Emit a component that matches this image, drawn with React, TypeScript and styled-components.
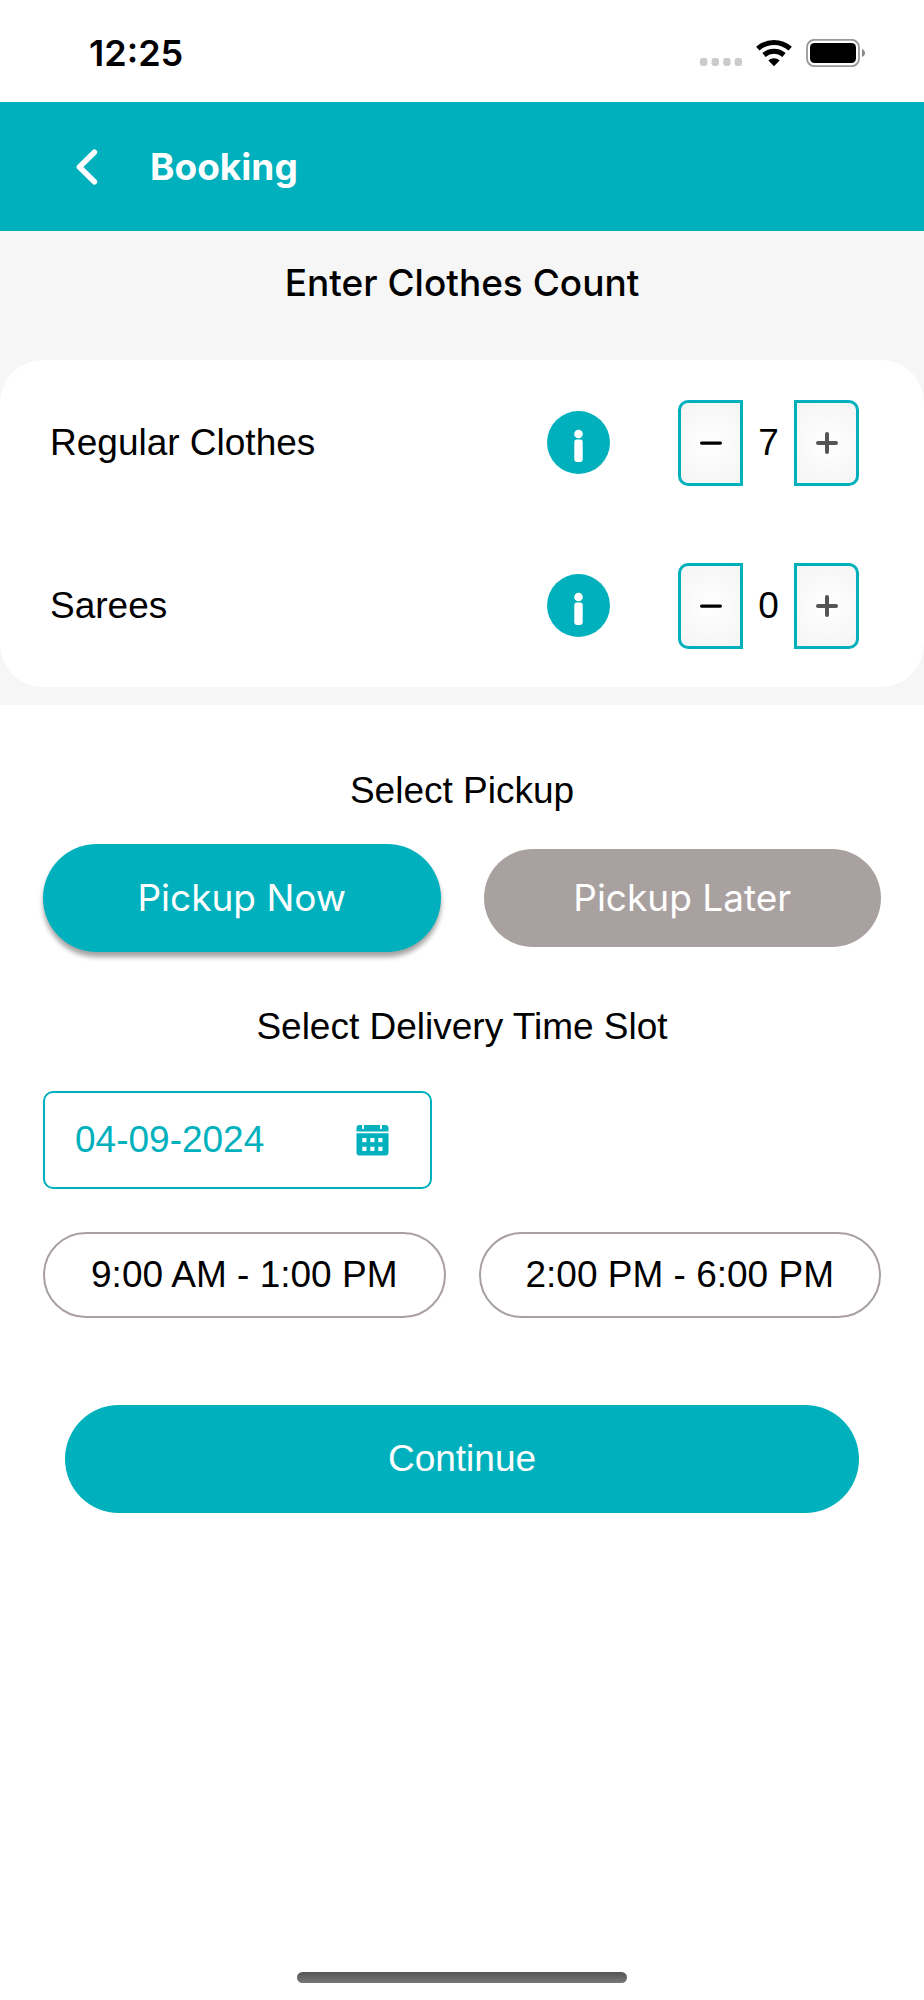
import React, { useState } from "react";
import styled, { createGlobalStyle } from "styled-components";

const teal = "#00b1bd";
const grey = "#a9a0a0";
const uiFont = `Inter, "Liberation Sans", sans-serif`;
const bodyFont = `"Liberation Sans", Arial, sans-serif`;

const GlobalStyle = createGlobalStyle`
  *, *::before, *::after { box-sizing: border-box; }
  body { margin: 0; background: #fff; }
  button, input { font: inherit; color: inherit; }
  button { cursor: pointer; }
`;

const Screen = styled.div`
  min-height: 100vh;
  display: flex;
  flex-direction: column;
  background: #fff;
  color: #000;
  font-family: ${bodyFont};
  font-size: 37px;
  line-height: 44px;
`;

const StatusBar = styled.div`
  height: 102px;
  padding: 4px 59px 0 89px;
  display: flex;
  align-items: center;
  justify-content: space-between;
  font-family: ${uiFont};
  font-size: 36px;
  font-weight: 600;
`;

const StatusIcons = styled.div`
  display: flex;
  align-items: center;
  gap: 14px;
`;

const Header = styled.header`
  height: 129px;
  padding: 0 64px;
  display: flex;
  align-items: center;
  gap: 40px;
  background: ${teal};
  color: #fff;
`;

const BackButton = styled.button`
  display: flex;
  padding: 0 12px;
  border: 0;
  background: none;
`;

const HeaderTitle = styled.h1`
  margin: 0;
  font-family: ${uiFont};
  font-size: 37px;
  font-weight: 700;
`;

const CountSection = styled.section`
  padding-bottom: 18px;
  background: #f6f6f6;
`;

const Heading = styled.h2<{ $ui?: boolean }>`
  margin: 0;
  font-family: ${(p) => (p.$ui ? uiFont : bodyFont)};
  font-size: 37px;
  font-weight: ${(p) => (p.$ui ? 500 : 400)};
  text-align: center;
`;

const CountHeading = styled(Heading)`
  padding: 30px 0 55px;
`;

const Card = styled.div`
  padding-top: 1px;
  border-radius: 43px;
  background: #fff;
`;

const ItemRow = styled.div`
  height: 163px;
  padding: 0 65px 0 50px;
  display: flex;
  align-items: center;
`;

const ItemName = styled.span`
  flex: 1;
`;

const InfoButton = styled.button`
  display: flex;
  margin-right: 68px;
  padding: 0;
  border: 0;
  background: none;
`;

const Stepper = styled.div`
  display: flex;
  align-items: center;
`;

const StepButton = styled.button<{ $side: "left" | "right" }>`
  width: 65px;
  height: 86px;
  padding: 0;
  display: flex;
  align-items: center;
  justify-content: center;
  border: 3px solid ${teal};
  border-radius: ${(p) => (p.$side === "left" ? "10px 0 0 10px" : "0 10px 10px 0")};
  background: radial-gradient(circle, #fff 0%, #f4f4f4 100%);
`;

const Count = styled.output`
  width: 51px;
  text-align: center;
`;

const Form = styled.main`
  padding: 64px 43px 0;
  display: flex;
  flex-direction: column;
`;

const PickupRow = styled.div`
  display: grid;
  grid-template-columns: 1fr 1fr;
  align-items: center;
  gap: 43px;
  margin: 31px 0 53px;
`;

const PickupButton = styled.button<{ $active: boolean }>`
  height: ${(p) => (p.$active ? 108 : 98)}px;
  border: 0;
  border-radius: 54px;
  background: ${(p) => (p.$active ? teal : grey)};
  box-shadow: ${(p) => (p.$active ? "0 5px 5px rgba(0, 0, 0, 0.36)" : "none")};
  color: #fff;
  font-family: ${uiFont};
`;

const DateField = styled.div`
  width: 100%;
  max-width: 389px;
  height: 98px;
  margin: 42px 0 43px;
  padding: 0 41px 0 30px;
  display: flex;
  align-items: center;
  justify-content: space-between;
  border: 2px solid ${teal};
  border-radius: 10px;
  color: ${teal};
`;

const DateInput = styled.input`
  flex: 1;
  min-width: 0;
  padding: 0;
  border: 0;
  outline: 0;
  background: none;
`;

const CalendarButton = styled.button`
  display: flex;
  padding: 0;
  border: 0;
  background: none;
`;

const SlotRow = styled.div`
  display: grid;
  grid-template-columns: 1fr 1fr;
  gap: 33px;
`;

const SlotButton = styled.button<{ $active: boolean }>`
  height: 86px;
  padding: 0;
  border: 2px solid ${(p) => (p.$active ? teal : grey)};
  border-radius: 43px;
  background: #fff;
`;

const ContinueButton = styled.button`
  height: 108px;
  margin: 87px 22px 0;
  border: 0;
  border-radius: 54px;
  background: ${teal};
  color: #fff;
`;

const HomeBar = styled.div`
  width: 330px;
  height: 11px;
  margin: auto auto 17px;
  border-radius: 6px;
  background: linear-gradient(#555, #777);
`;

const SignalDots = () => (
  <svg width="42" height="28" viewBox="0 0 42 28" fill="#cbcbcb" aria-hidden="true">
    {[0, 11.6, 23.2, 34.6].map((x) => (
      <rect key={x} x={x} y="19" width="7.4" height="8" rx="2.4" />
    ))}
  </svg>
);

const WifiIcon = () => (
  <svg width="36" height="28" viewBox="0 0 36 28" aria-hidden="true">
    <g fill="none" stroke="#000" strokeWidth="5">
      <path d="M1.8 9.6C11 1.3 25 1.3 34.2 9.6" />
      <path d="M8 16C13.8 10.9 22.2 10.9 28 16" />
    </g>
    <path d="M18 27.2 12.4 21.5C15.6 18.6 20.4 18.6 23.6 21.5Z" fill="#000" />
  </svg>
);

const BatteryIcon = () => (
  <svg width="59" height="28" viewBox="0 0 59 28" aria-hidden="true">
    <rect x="1" y="0.8" width="52" height="26.4" rx="7.5" fill="none" stroke="#999" strokeWidth="1.8" />
    <rect x="4" y="4" width="46" height="20" rx="4.5" fill="#000" />
    <path d="M56 10c4 1.4 4 6.6 0 8z" fill="#888" />
  </svg>
);

const BackIcon = () => (
  <svg width="22" height="36" viewBox="0 0 22 36" fill="none" stroke="#fff" strokeWidth="5.5" strokeLinecap="round" strokeLinejoin="round" aria-hidden="true">
    <path d="M18.4 3.2 3.4 18 18.4 32.8" />
  </svg>
);

const InfoIcon = () => (
  <svg width="63" height="63" viewBox="0 0 63 63" aria-hidden="true">
    <circle cx="31.5" cy="31.5" r="31.5" fill={teal} />
    <circle cx="31.5" cy="23" r="4.3" fill="#fff" />
    <rect x="27.3" y="28.6" width="8.4" height="22.4" rx="2.4" fill="#fff" />
  </svg>
);

const MinusIcon = () => (
  <svg width="22" height="22" viewBox="0 0 22 22" aria-hidden="true">
    <rect x="0" y="9.5" width="22" height="3.2" rx="1.6" fill="#000" />
  </svg>
);

const PlusIcon = () => (
  <svg width="22" height="22" viewBox="0 0 22 22" fill="#555" aria-hidden="true">
    <rect x="0" y="9" width="22" height="4" rx="2" />
    <rect x="9" y="0" width="4" height="22" rx="2" />
  </svg>
);

const CalendarIcon = () => (
  <svg width="33" height="32" viewBox="0 0 33 32" aria-hidden="true">
    <path d="M3.5 1H6v3.2a1 1 0 0 0 2 0V1h16v3.2a1 1 0 0 0 2 0V1h3.5Q32.5 1 32.5 4V7.5H.5V4Q.5 1 3.5 1Z" fill={teal} />
    <path
      fillRule="evenodd"
      fill={teal}
      d="M.5 9.2h32V28.500q0 3-3 3h-26q-3 0-3-3ZM6.300 14v4.200h4.200v-4.200ZM14.300 14v4.200h4.200v-4.200ZM22.300 14v4.200h4.200v-4.200ZM6.300 22.800v4.200h4.200v-4.200ZM14.300 22.800v4.200h4.200v-4.200ZM22.300 22.800v4.200h4.200v-4.200Z"
    />
  </svg>
);

function CountRow({ name, initial }: { name: string; initial: number }) {
  const [count, setCount] = useState(initial);
  return (
    <ItemRow>
      <ItemName>{name}</ItemName>
      <InfoButton type="button" aria-label={`About ${name}`}>
        <InfoIcon />
      </InfoButton>
      <Stepper role="group" aria-label={name}>
        <StepButton type="button" $side="left" aria-label="Decrease" onClick={() => setCount(Math.max(0, count - 1))}>
          <MinusIcon />
        </StepButton>
        <Count>{count}</Count>
        <StepButton type="button" $side="right" aria-label="Increase" onClick={() => setCount(count + 1)}>
          <PlusIcon />
        </StepButton>
      </Stepper>
    </ItemRow>
  );
}

const pickups = ["Pickup Now", "Pickup Later"];
const slots = ["9:00 AM - 1:00 PM", "2:00 PM - 6:00 PM"];

export default function App() {
  const [pickup, setPickup] = useState(pickups[0]);
  const [slot, setSlot] = useState<string | null>(null);
  const [date, setDate] = useState("04-09-2024");

  return (
    <Screen>
      <GlobalStyle />
      <StatusBar>
        <span>12:25</span>
        <StatusIcons>
          <SignalDots />
          <WifiIcon />
          <BatteryIcon />
        </StatusIcons>
      </StatusBar>
      <Header>
        <BackButton type="button" aria-label="Back">
          <BackIcon />
        </BackButton>
        <HeaderTitle>Booking</HeaderTitle>
      </Header>
      <CountSection>
        <CountHeading $ui>Enter Clothes Count</CountHeading>
        <Card>
          <CountRow name="Regular Clothes" initial={7} />
          <CountRow name="Sarees" initial={0} />
        </Card>
      </CountSection>
      <Form>
        <Heading>Select Pickup</Heading>
        <PickupRow>
          {pickups.map((p) => (
            <PickupButton key={p} type="button" $active={p === pickup} aria-pressed={p === pickup} onClick={() => setPickup(p)}>
              {p}
            </PickupButton>
          ))}
        </PickupRow>
        <Heading>Select Delivery Time Slot</Heading>
        <DateField>
          <DateInput type="text" aria-label="Delivery date" value={date} onChange={(e) => setDate(e.target.value)} />
          <CalendarButton type="button" aria-label="Open calendar">
            <CalendarIcon />
          </CalendarButton>
        </DateField>
        <SlotRow>
          {slots.map((s) => (
            <SlotButton key={s} type="button" $active={s === slot} aria-pressed={s === slot} onClick={() => setSlot(s)}>
              {s}
            </SlotButton>
          ))}
        </SlotRow>
        <ContinueButton type="button">Continue</ContinueButton>
      </Form>
      <HomeBar />
    </Screen>
  );
}
